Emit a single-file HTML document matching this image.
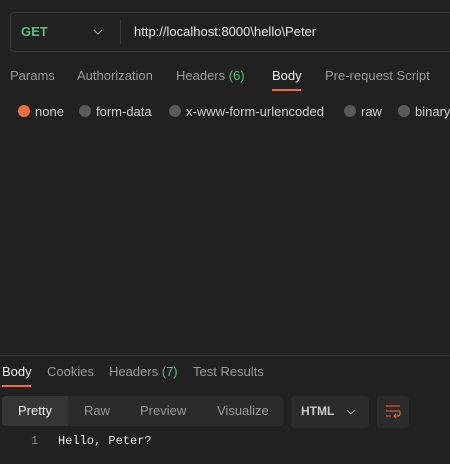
<!DOCTYPE html>
<html><head><style>
body{margin:0;width:450px;height:464px;background:#212121;font-family:"Liberation Sans",sans-serif;font-size:13px;color:#d0d0d0;position:relative;overflow:hidden}
.a{position:absolute;white-space:nowrap}
.g{color:#9a9a9a}
</style></head><body>
<div class="a" style="left:10px;top:12px;width:460px;height:40px;border:1px solid #3b3b3b;border-radius:4px;box-sizing:border-box"></div>
<div class="a" style="left:21px;top:24px;color:#4fc37f;font-weight:bold">GET</div>
<svg class="a" style="left:93px;top:29px" width="10" height="6"><path d="M1 1L5 5L9 1" stroke="#999" fill="none"/></svg>
<div class="a" style="left:120px;top:20px;width:1px;height:24px;background:#3b3b3b"></div>
<div class="a" style="left:134px;top:24px;color:#e8e8e8">http://localhost:8000\hello\Peter</div>
<div class="a g" style="left:10px;top:68px">Params</div>
<div class="a g" style="left:77px;top:68px">Authorization</div>
<div class="a g" style="left:176px;top:68px">Headers <span style="color:#4fc37f">(6)</span></div>
<div class="a" style="left:272px;top:68px;color:#eee">Body</div>
<div class="a" style="left:272px;top:89px;width:29px;height:2px;background:#f26b3a"></div>
<div class="a g" style="left:325px;top:68px">Pre-request Script</div>
<div class="a" style="left:18px;top:105px;width:12px;height:12px;border-radius:50%;background:#f26b3a;box-shadow:0 0 0 0 #555"></div>
<div class="a" style="left:35px;top:104px">none</div>
<div class="a" style="left:79px;top:105px;width:12px;height:12px;border-radius:50%;background:#5a5a5a"></div>
<div class="a" style="left:96px;top:104px">form-data</div>
<div class="a" style="left:169px;top:105px;width:12px;height:12px;border-radius:50%;background:#5a5a5a"></div>
<div class="a" style="left:186px;top:104px">x-www-form-urlencoded</div>
<div class="a" style="left:344px;top:105px;width:12px;height:12px;border-radius:50%;background:#5a5a5a"></div>
<div class="a" style="left:361px;top:104px">raw</div>
<div class="a" style="left:398px;top:105px;width:12px;height:12px;border-radius:50%;background:#5a5a5a"></div>
<div class="a" style="left:415px;top:104px">binary</div>
<div class="a" style="left:0;top:355px;width:450px;height:1px;background:#333"></div>
<div class="a" style="left:2px;top:364px;color:#eee">Body</div>
<div class="a" style="left:2px;top:385px;width:29px;height:2px;background:#f26b3a"></div>
<div class="a g" style="left:47px;top:364px">Cookies</div>
<div class="a g" style="left:109px;top:364px">Headers <span style="color:#4fc37f">(7)</span></div>
<div class="a g" style="left:193px;top:364px">Test Results</div>
<div class="a" style="left:2px;top:396px;width:281px;height:30px;background:#2b2b2b;border-radius:4px"></div>
<div class="a" style="left:2px;top:396px;width:66px;height:30px;background:#363636;border-radius:4px 0 0 4px"></div>
<div class="a" style="left:18px;top:403px;color:#eee">Pretty</div>
<div class="a g" style="left:84px;top:403px">Raw</div>
<div class="a g" style="left:140px;top:403px">Preview</div>
<div class="a g" style="left:217px;top:403px">Visualize</div>
<div class="a" style="left:291px;top:396px;width:78px;height:32px;background:#2b2b2b;border-radius:4px"></div>
<div class="a" style="left:301px;top:404px;color:#ccc;font-weight:bold;font-size:12px">HTML</div>
<svg class="a" style="left:346px;top:409px" width="10" height="6"><path d="M1 1L5 5L9 1" stroke="#999" fill="none"/></svg>
<div class="a" style="left:377px;top:396px;width:32px;height:32px;background:#2b2b2b;border-radius:4px"></div>
<svg class="a" style="left:385px;top:404px" width="16" height="16"><path d="M1 2H15M1 7H15M1 12H6M15 7V10Q15 12 13 12H9M11 10L9 12L11 14" stroke="#f26b3a" fill="none" stroke-width="1"/></svg>
<div class="a" style="left:31px;top:434px;color:#888;font-family:'Liberation Mono',monospace;font-size:12px">1</div>
<div class="a" style="left:58px;top:434px;color:#e8e8e8;font-family:'Liberation Mono',monospace;font-size:12px">Hello, Peter?</div>
</body></html>
